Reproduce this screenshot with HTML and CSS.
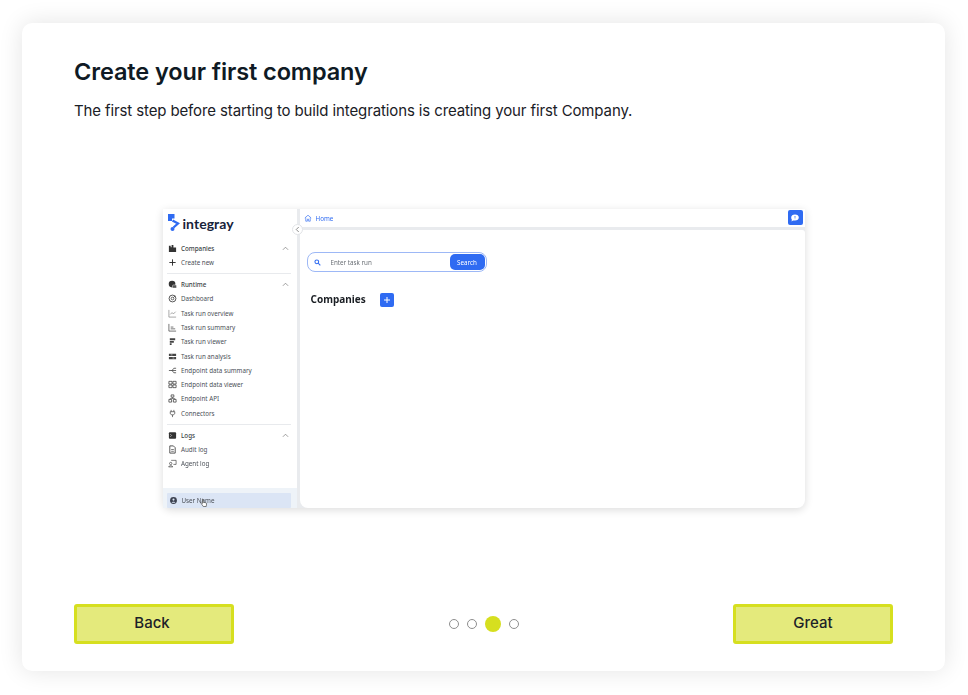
FILE: index.html
```html
<!DOCTYPE html>
<html lang="en">
<head>
<meta charset="utf-8">
<title>Create your first company</title>
<link rel="stylesheet" href="styles.css">
</head>
<body>
<main class="card">
  <header class="intro">
    <h1>Create your first company</h1>
    <p>The first step before starting to build integrations is creating your first Company.</p>
  </header>
  <div class="stage">
    <div class="mock">
      <aside class="side">
        <div class="logo">
          <svg class="logo-mark" viewBox="0 0 16 20" width="16" height="20"><path d="M1 1h6.500v4.500H5v2.500H1z" fill="#2f6bf2"/><path d="M5.500 7.500 L11 10.500 L6.500 14.500" fill="none" stroke="#2f6bf2" stroke-width="2.300"/><circle cx="5.500" cy="16" r="2" fill="#2f6bf2"/></svg>
          <span>integray</span>
        </div>
        <div class="nav">
          <div class="row head"><svg class="ico" viewBox="0 0 10 10"><path d="M1 9V2h2v1.500h1V1h2v3h3v5z" fill="#333"/></svg><span>Companies</span><svg class="chev" viewBox="0 0 8 5"><path d="M1 4l3-3 3 3" fill="none" stroke="#777" stroke-width=".8"/></svg></div>
          <div class="row"><svg class="ico" viewBox="0 0 10 10"><path d="M5 1.500v7M1.500 5h7" stroke="#222" stroke-width="1"/></svg><span>Create new</span></div>
          <hr class="rule">
          <div class="row head"><svg class="ico" viewBox="0 0 10 10"><circle cx="4.500" cy="4.500" r="3.700" fill="#333"/><rect x="5" y="5.500" width="4.500" height="3.500" rx="1" fill="#555" stroke="#fff" stroke-width=".5"/></svg><span>Runtime</span><svg class="chev" viewBox="0 0 8 5"><path d="M1 4l3-3 3 3" fill="none" stroke="#777" stroke-width=".8"/></svg></div>
          <div class="row"><svg class="ico" viewBox="0 0 10 10"><circle cx="5" cy="5" r="3.800" fill="none" stroke="#333" stroke-width=".9"/><circle cx="5" cy="5" r="1.500" fill="none" stroke="#333" stroke-width=".8"/><path d="M6 4l2-2" stroke="#333" stroke-width=".8"/></svg><span>Dashboard</span></div>
          <div class="row"><svg class="ico" viewBox="0 0 10 10"><path d="M1 1v8h8M2.500 6l2-2 1.500 1.500L8.500 3" fill="none" stroke="#777" stroke-width=".7"/></svg><span>Task run overview</span></div>
          <div class="row"><svg class="ico" viewBox="0 0 10 10"><path d="M1 1v8h8M3 6.500h5M3 4.500h3" fill="none" stroke="#444" stroke-width=".8"/></svg><span>Task run summary</span></div>
          <div class="row"><svg class="ico" viewBox="0 0 10 10"><path d="M2 1.500h6v2H2zM2 4.500h4.500v2H2zM2 7h2v2H2z" fill="#444"/></svg><span>Task run viewer</span></div>
          <div class="row"><svg class="ico" viewBox="0 0 10 10"><path d="M1 2h8v2.500H1zM1 5.500h8V8H1z" fill="#444"/><path d="M3 3.200h2M5 6.700h2" stroke="#fff" stroke-width=".6"/></svg><span>Task run analysis</span></div>
          <div class="row"><svg class="ico" viewBox="0 0 10 10"><path d="M1 5h3.500M4.500 5L6.500 2.500H9M4.500 5h4.500M4.500 5l2 2.500H9" fill="none" stroke="#333" stroke-width=".8"/></svg><span>Endpoint data summary</span></div>
          <div class="row"><svg class="ico" viewBox="0 0 10 10"><path d="M1 1.500h3.500v3H1zM5.500 1.500H9v3H5.500zM1 5.500h3.500v3H1zM5.500 5.500H9v3H5.500z" fill="none" stroke="#333" stroke-width=".8"/></svg><span>Endpoint data viewer</span></div>
          <div class="row"><svg class="ico" viewBox="0 0 10 10"><path d="M3.500 1h3v2.500h-3zM1 6h3v3H1zM6 6h3v3H6z" fill="none" stroke="#333" stroke-width=".8"/><path d="M5 3.500V5M2.500 6V5h5v1" fill="none" stroke="#333" stroke-width=".6"/></svg><span>Endpoint API</span></div>
          <div class="row"><svg class="ico" viewBox="0 0 10 10"><path d="M3.500 1v2M6.500 1v2M2.500 3h5v1.500C7.500 6 6.500 6.500 5 6.500S2.500 6 2.500 4.500zM5 6.500V9" fill="none" stroke="#444" stroke-width=".8"/></svg><span>Connectors</span></div>
          <hr class="rule">
          <div class="row head"><svg class="ico" viewBox="0 0 10 10"><rect x="1" y="1.500" width="8" height="7" rx="1" fill="#333"/><path d="M2.500 3.500L4 5 2.500 6.500" fill="none" stroke="#fff" stroke-width=".6"/></svg><span>Logs</span><svg class="chev" viewBox="0 0 8 5"><path d="M1 4l3-3 3 3" fill="none" stroke="#777" stroke-width=".8"/></svg></div>
          <div class="row"><svg class="ico" viewBox="0 0 10 10"><path d="M2 1h4l2 2v6H2z" fill="none" stroke="#333" stroke-width=".9"/><path d="M3.500 5h3M3.500 7h3" stroke="#333" stroke-width=".7"/></svg><span>Audit log</span></div>
          <div class="row"><svg class="ico" viewBox="0 0 10 10"><path d="M3.500 1.500h5.500v4.500H6" fill="none" stroke="#333" stroke-width=".7"/><circle cx="3" cy="5" r="1.300" fill="none" stroke="#333" stroke-width=".7"/><path d="M.7 8.800C1 7 5 7 5.300 8.800z" fill="none" stroke="#333" stroke-width=".7"/></svg><span>Agent log</span></div>
        </div>
        <div class="foot">
          <div class="user"><svg class="ico" viewBox="0 0 10 10"><circle cx="5" cy="5" r="3.800" fill="#3c4250"/><circle cx="5" cy="4" r="1.200" fill="#dbe5f5"/><path d="M2.800 7.600C3.300 5.800 6.700 5.800 7.200 7.600z" fill="#dbe5f5"/></svg><span>User Name</span>
            <svg class="cursor" viewBox="0 0 8 10" width="8" height="10"><path d="M2.300 1c.6 0 .8.400.8.800v2.400l2.700.6c.6.200.9.500.8 1.100L6.200 8.500H3.300L1.300 5.700c-.3-.5.300-1 .700-.6l.4.400V1.800c0-.4-.4-.8-.1-.8z" fill="#fff" stroke="#333" stroke-width=".6"/></svg>
          </div>
        </div>
      </aside>
      <button class="collapse" type="button"><svg viewBox="0 0 6 8" width="5" height="7"><path d="M4.500 1L1.500 4l3 3" fill="none" stroke="#555" stroke-width=".8"/></svg></button>
      <section class="content">
        <div class="topbar">
          <div class="crumb"><svg viewBox="0 0 10 10" width="8" height="8"><path d="M1 5l4-3.500L9 5M2.200 4.500V9h2V6.500h1.600V9h2V4.500" fill="none" stroke="#2f6bf2" stroke-width=".8"/></svg><span>Home</span></div>
          <div class="chat"><svg viewBox="0 0 10 10" width="10" height="10"><path d="M5 1.500c2.300 0 3.800 1.200 3.800 3S7.300 7.500 5 7.500H3L1.500 8.500l.4-1.700C1.400 6.200 1.200 5.400 1.200 4.500c0-1.800 1.500-3 3.800-3z" fill="#fff"/><path d="M5 3v1.800M5 5.600v.5" stroke="#2f6bf2" stroke-width=".8"/></svg></div>
        </div>
        <div class="panel">
          <div class="search">
            <svg viewBox="0 0 10 10" width="7" height="7"><circle cx="4" cy="4" r="2.700" fill="none" stroke="#2f6bf2" stroke-width="1.500"/><path d="M6 6l3 3" stroke="#2f6bf2" stroke-width="1.500"/></svg>
            <span class="placeholder">Enter task run</span>
            <span class="search-btn">Search</span>
          </div>
          <div class="companies">
            <h2>Companies</h2>
            <span class="add"><svg viewBox="0 0 8 8" width="8" height="8"><path d="M4 1v6M1 4h6" stroke="#fff" stroke-width="1"/></svg></span>
          </div>
        </div>
      </section>
    </div>
  </div>
  <footer class="actions">
    <button class="btn back" type="button">Back</button>
    <div class="dots"><i class="dot"></i><i class="dot"></i><i class="dot on"></i><i class="dot"></i></div>
    <button class="btn" type="button">Great</button>
  </footer>
</main>
</body>
</html>
```
FILE: styles.css
```css
* { box-sizing: border-box; }
html, body { margin: 0; height: 100%; }
body {
  background: #fff;
  padding: 23px 23px 24px 22px;
  font-family: "Inter", "Liberation Sans", sans-serif;
  color: #0f1a24;
  overflow: hidden;
}
.card {
  height: 648px;
  background: #fff;
  border-radius: 10px;
  box-shadow: 0 0 24px rgba(0, 0, 0, .11);
  padding: 34px 52px 27px 52px;
  display: flex;
  flex-direction: column;
}
h1 {
  margin: 0;
  font-size: 23.500px;
  line-height: 30px;
  font-weight: 600;
  letter-spacing: -.1px;
}
.intro p {
  margin: 12px 0 0;
  font-size: 15px;
  line-height: 24px;
  letter-spacing: -.12px;
  color: #1a2026;
}
.stage {
  height: 0;
  flex: 1;
  display: flex;
  justify-content: center;
  padding: 86px 0 0 0;
}
.mock {
  position: relative;
  width: 642px;
  height: 299px;
  display: flex;
  background: #e9ebee;
  border-radius: 0 0 8px 8px;
  box-shadow: 0 2px 9px rgba(0, 0, 0, .14);
  font-family: "Noto Sans", sans-serif;
  filter: blur(.35px);
}
.side {
  width: 134px;
  background: #fff;
  display: flex;
  flex-direction: column;
}
.logo {
  height: 26px;
  padding: 2px 0 0 4px;
  display: flex;
  align-items: center;
  font-family: "Lato", sans-serif;
  font-weight: 700;
  font-size: 14px;
  letter-spacing: .05px;
  color: #17233a;
}
.logo-mark { flex: none; }
.nav {
  flex: 1;
  padding: 6px 6px 0 5.500px;
}
.row {
  height: 14.300px;
  display: flex;
  align-items: center;
  font-size: 6.250px;
  color: #4a4f57;
}
.row.head { color: #3a3f46; font-weight: 500; }
.ico { width: 9px; height: 9px; flex: none; margin-right: 4px; }
.chev { width: 7px; height: 5px; margin-left: auto; margin-right: 2px; }
.rule {
  border: 0;
  border-top: 1px solid #e8eaed;
  margin: 3.800px 0 3px -1px;
}
.foot {
  height: 20px;
  background: #eef3f8;
  padding: 5px 6px 0 4px;
}
.user {
  position: relative;
  height: 15px;
  background: #dbe5f5;
  border-radius: 1px;
  display: flex;
  align-items: center;
  padding-left: 2px;
  font-size: 6.250px;
  color: #4a4f57;
}
.cursor { position: absolute; left: 33px; top: 5px; }
.collapse {
  position: absolute;
  left: 129px;
  top: 15px;
  width: 11px;
  height: 11px;
  padding: 0;
  border: 1px solid #e2e4e7;
  border-radius: 50%;
  background: #fff;
  display: flex;
  align-items: center;
  justify-content: center;
}
.content {
  width: 0;
  flex: 1;
  margin-left: 3px;
  display: flex;
  flex-direction: column;
}
.topbar {
  height: 18px;
  background: #fff;
  display: flex;
  align-items: center;
  justify-content: space-between;
}
.crumb {
  display: flex;
  align-items: center;
  gap: 4px;
  padding-left: 4px;
  font-size: 6.250px;
  color: #2f6bf2;
}
.chat {
  width: 15px;
  height: 15px;
  border-radius: 2px;
  background: #2f6bf2;
  display: flex;
  align-items: center;
  justify-content: center;
  margin-right: 2px;
  margin-top: -1px;
}
.panel {
  flex: 1;
  margin-top: 3px;
  background: #fff;
  border-radius: 3px 3px 8px 8px;
  padding: 22px 0 0 7px;
}
.search {
  width: 180px;
  height: 20px;
  border: 1px solid #9db8f6;
  border-radius: 8px;
  display: flex;
  align-items: center;
  padding: 0 1px 0 6px;
  font-size: 6.250px;
}
.placeholder { flex: 1; padding-left: 10px; color: #6b7076; }
.search-btn {
  width: 35px;
  height: 16px;
  border-radius: 5px;
  background: #2f6bf2;
  color: #fff;
  display: flex;
  align-items: center;
  justify-content: center;
}
.companies {
  display: flex;
  align-items: center;
  margin: 20px 0 0 4px;
}
h2 {
  margin: 0;
  width: 69px;
  font-size: 10px;
  line-height: 15px;
  font-weight: 700;
  color: #1b1f24;
}
.add {
  width: 14px;
  height: 14px;
  border-radius: 2px;
  background: #2f6bf2;
  display: flex;
  align-items: center;
  justify-content: center;
}
.actions {
  display: flex;
  align-items: center;
  justify-content: space-between;
}
.btn {
  width: 160px;
  height: 40px;
  background: #e4ea7c;
  border: 3px solid #d6df1f;
  border-radius: 3px;
  font-family: "Inter", "Liberation Sans", sans-serif;
  font-size: 15px;
  font-weight: 500;
  color: #1c2228;
  padding: 0 0 3px;
}
.btn.back { padding-right: 4px; }
.dots {
  display: flex;
  align-items: center;
  gap: 8px;
}
.dot {
  width: 10px;
  height: 10px;
  border: 1px solid #8e8e8e;
  border-radius: 50%;
}
.dot.on {
  width: 16px;
  height: 16px;
  border: 0;
  background: #d6df1f;
}
```
